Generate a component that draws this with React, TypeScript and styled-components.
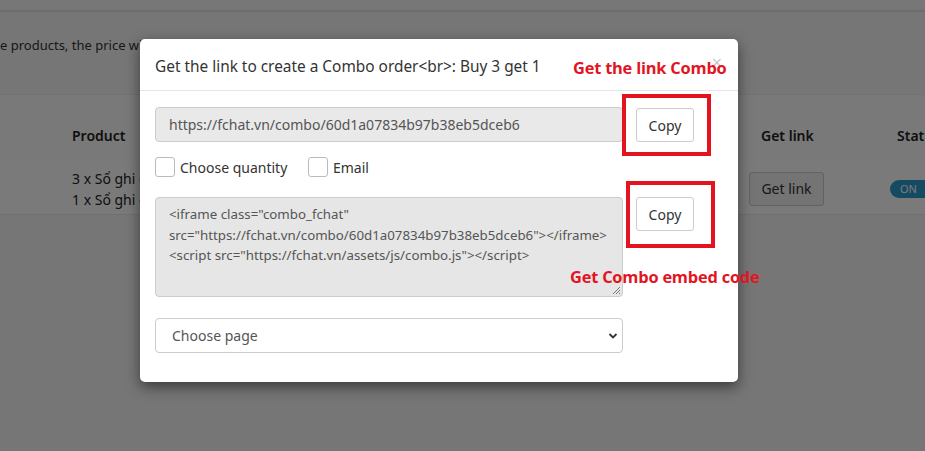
import React from "react";
import styled, { createGlobalStyle } from "styled-components";

const Global = createGlobalStyle`
  html, body { margin: 0; padding: 0; }
  body { width: 925px; height: 451px; overflow: hidden; background: #fff; font-family: "Noto Sans", "Open Sans", sans-serif; }
`;

const Page = styled.div`
  position: relative;
  width: 925px;
  height: 451px;
  overflow: hidden;
  background: #f7f7f7;
  color: #222;
`;

const TopBar = styled.div`
  height: 10px;
  background: #f9f9f9;
  border-bottom: 2px solid #e4e4e4;
`;

const Intro = styled.div`
  margin-top: 24px;
  font-size: 13px;
  color: #333;
  white-space: nowrap;
  height: 58px;
`;

const Table = styled.div`
  background: #fff;
  border-top: 1px solid #f0f0f0;
`;

const HeadRow = styled.div`
  display: grid;
  grid-template-columns: 72px 689px 136px 1fr;
  height: 67px;
  box-sizing: border-box;
  padding-bottom: 16px;
  align-items: end;
  font-size: 14px;
  font-weight: 600;
  background: #fdfdfd;
`;

const BodyRow = styled.div`
  display: grid;
  grid-template-columns: 72px 689px 136px 1fr;
  height: 53px;
  box-sizing: border-box;
  padding-top: 1px;
  align-items: center;
  font-size: 14px;
  border-bottom: 1px solid #eaeaea;
`;

const Cell = styled.div`
  line-height: 21px;
  white-space: nowrap;
`;

const GhostButton = styled.div`
  display: inline-flex;
  align-items: center;
  justify-content: center;
  width: 73px;
  height: 32px;
  margin-left: -12px;
  border: 1px solid #ccc;
  border-radius: 3px;
  background: #f2f2f2;
  font-size: 14px;
  color: #333;
`;

const Toggle = styled.div`
  width: 48px;
  height: 18px;
  border-radius: 9px;
  margin-left: -7px;
  background: #2c9bd0;
  color: #fff;
  font-size: 11px;
  line-height: 18px;
  padding-left: 10px;
  box-sizing: border-box;
`;

const Overlay = styled.div`
  position: absolute;
  inset: 0;
  background: rgba(0, 0, 0, 0.52);
  padding: 39px 0 0 140px;
  box-sizing: border-box;
`;

const Modal = styled.div`
  position: relative;
  width: 598px;
  background: #fff;
  border-radius: 5px;
  box-shadow: 0 5px 14px rgba(0, 0, 0, 0.5);
  color: #333;
`;

const Header = styled.div`
  position: relative;
  height: 52px;
  box-sizing: border-box;
  padding: 0 15px;
  display: flex;
  align-items: center;
  border-bottom: 1px solid #e5e5e5;
`;

const Title = styled.h4`
  margin: 0;
  margin-top: 3px;
  font-size: 15.4px;
  font-weight: 400;
  color: #333;
`;

const Close = styled.span`
  position: absolute;
  right: 16px;
  top: 14px;
  font-size: 18px;
  color: #c8c8c8;
  line-height: 1;
`;

const Body = styled.div`
  padding: 16px 15px 29px;
  display: grid;
  grid-template-columns: 468px 58px;
  column-gap: 13px;
  align-items: start;
`;

const Field = styled.div`
  height: 35px;
  box-sizing: border-box;
  border: 1px solid #ccc;
  border-radius: 4px;
  background: #e9e9e9;
  padding: 0 13px;
  display: flex;
  align-items: center;
  font-size: 14px;
  color: #555;
`;

const CopyButton = styled.button<{ $offset?: number }>`
  margin-top: ${(p) => p.$offset ?? 0}px;
  width: 58px;
  height: 34px;
  box-sizing: border-box;
  border: 1px solid #ccc;
  border-radius: 3px;
  background: #fff;
  font-family: inherit;
  font-size: 14px;
  color: #333;
  padding: 0;
`;

const Checks = styled.div`
  grid-column: 1 / -1;
  display: flex;
  align-items: center;
  margin: 15px 0 20px;
  height: 20px;
`;

const CheckLabel = styled.label<{ $width: number }>`
  display: flex;
  align-items: center;
  gap: 5px;
  width: ${(p) => p.$width}px;
  font-size: 14px;
  color: #333;
`;

const Box = styled.span`
  width: 20px;
  height: 20px;
  box-sizing: border-box;
  border: 1px solid #bbb;
  border-radius: 3px;
  background: #fff;
`;

const CodeArea = styled.div`
  position: relative;
  height: 100px;
  box-sizing: border-box;
  border: 1px solid #ccc;
  border-radius: 4px;
  background: #e6e6e6;
  padding: 6px 13px;
  font-size: 13.3px;
  line-height: 20.5px;
  color: #555;
  white-space: pre;
`;

const Grip = styled.svg`
  position: absolute;
  right: 1px;
  bottom: 1px;
`;

const Select = styled.div`
  grid-column: 1;
  margin-top: 21px;
  height: 35px;
  box-sizing: border-box;
  border: 1px solid #ccc;
  border-radius: 4px;
  background: #fff;
  padding: 0 4px 0 16px;
  display: flex;
  align-items: center;
  justify-content: space-between;
  font-size: 14px;
  color: #555;
`;

const Callout = styled.div<{ $x: number; $y: number; $w: number; $h: number }>`
  position: absolute;
  left: ${(p) => p.$x}px;
  top: ${(p) => p.$y}px;
  width: ${(p) => p.$w}px;
  height: ${(p) => p.$h}px;
  box-sizing: border-box;
  border: 4px solid #e3141f;
  pointer-events: none;
`;

const Note = styled.div<{ $x: number; $y: number }>`
  position: absolute;
  left: ${(p) => p.$x}px;
  top: ${(p) => p.$y}px;
  font-family: "Open Sans", sans-serif;
  font-weight: 700;
  font-size: 16.4px;
  color: #e3141f;
  white-space: nowrap;
  letter-spacing: -0.2px;
`;

export default function App() {
  return (
    <>
      <Global />
      <Page>
        <TopBar />
        <Intro>e products, the price will be reduced when buying in a combo</Intro>
        <Table>
          <HeadRow>
            <span />
            <Cell>Product</Cell>
            <Cell>Get link</Cell>
            <Cell>Status</Cell>
          </HeadRow>
          <BodyRow>
            <span />
            <Cell>
              3 x Sổ ghi chép
              <br />1 x Sổ ghi chép
            </Cell>
            <Cell>
              <GhostButton>Get link</GhostButton>
            </Cell>
            <Cell>
              <Toggle>ON</Toggle>
            </Cell>
          </BodyRow>
        </Table>

        <Overlay>
          <Modal>
            <Header>
              <Title>Get the link to create a Combo order&lt;br&gt;: Buy 3 get 1</Title>
              <Close>×</Close>
            </Header>
            <Body>
              <Field>https://fchat.vn/combo/60d1a07834b97b38eb5dceb6</Field>
              <CopyButton $offset={1}>Copy</CopyButton>
              <Checks>
                <CheckLabel $width={153}>
                  <Box />
                  Choose quantity
                </CheckLabel>
                <CheckLabel $width={80}>
                  <Box />
                  Email
                </CheckLabel>
              </Checks>
              <CodeArea>
                {'<iframe class="combo_fchat"\nsrc="https://fchat.vn/combo/60d1a07834b97b38eb5dceb6"></iframe>\n<script src="https://fchat.vn/assets/js/combo.js"></script>'}
                <Grip width="9" height="9" viewBox="0 0 9 9">
                  <path d="M8 1 L1 8 M8 4 L4 8 M8 7 L7 8" stroke="#777" strokeWidth="1" />
                </Grip>
              </CodeArea>
              <CopyButton>Copy</CopyButton>
              <Select>
                Choose page
                <svg width="10" height="8" viewBox="0 0 10 8">
                  <path d="M1.5 2 L5 5.5 L8.5 2" stroke="#333" strokeWidth="1.8" fill="none" />
                </svg>
              </Select>
            </Body>
          </Modal>
        </Overlay>

        <Callout $x={622} $y={94} $w={89} $h={62} />
        <Callout $x={626} $y={181} $w={89} $h={67} />
        <Note $x={573} $y={56}>Get the link Combo</Note>
        <Note $x={570} $y={265}>Get Combo embed code</Note>
      </Page>
    </>
  );
}
